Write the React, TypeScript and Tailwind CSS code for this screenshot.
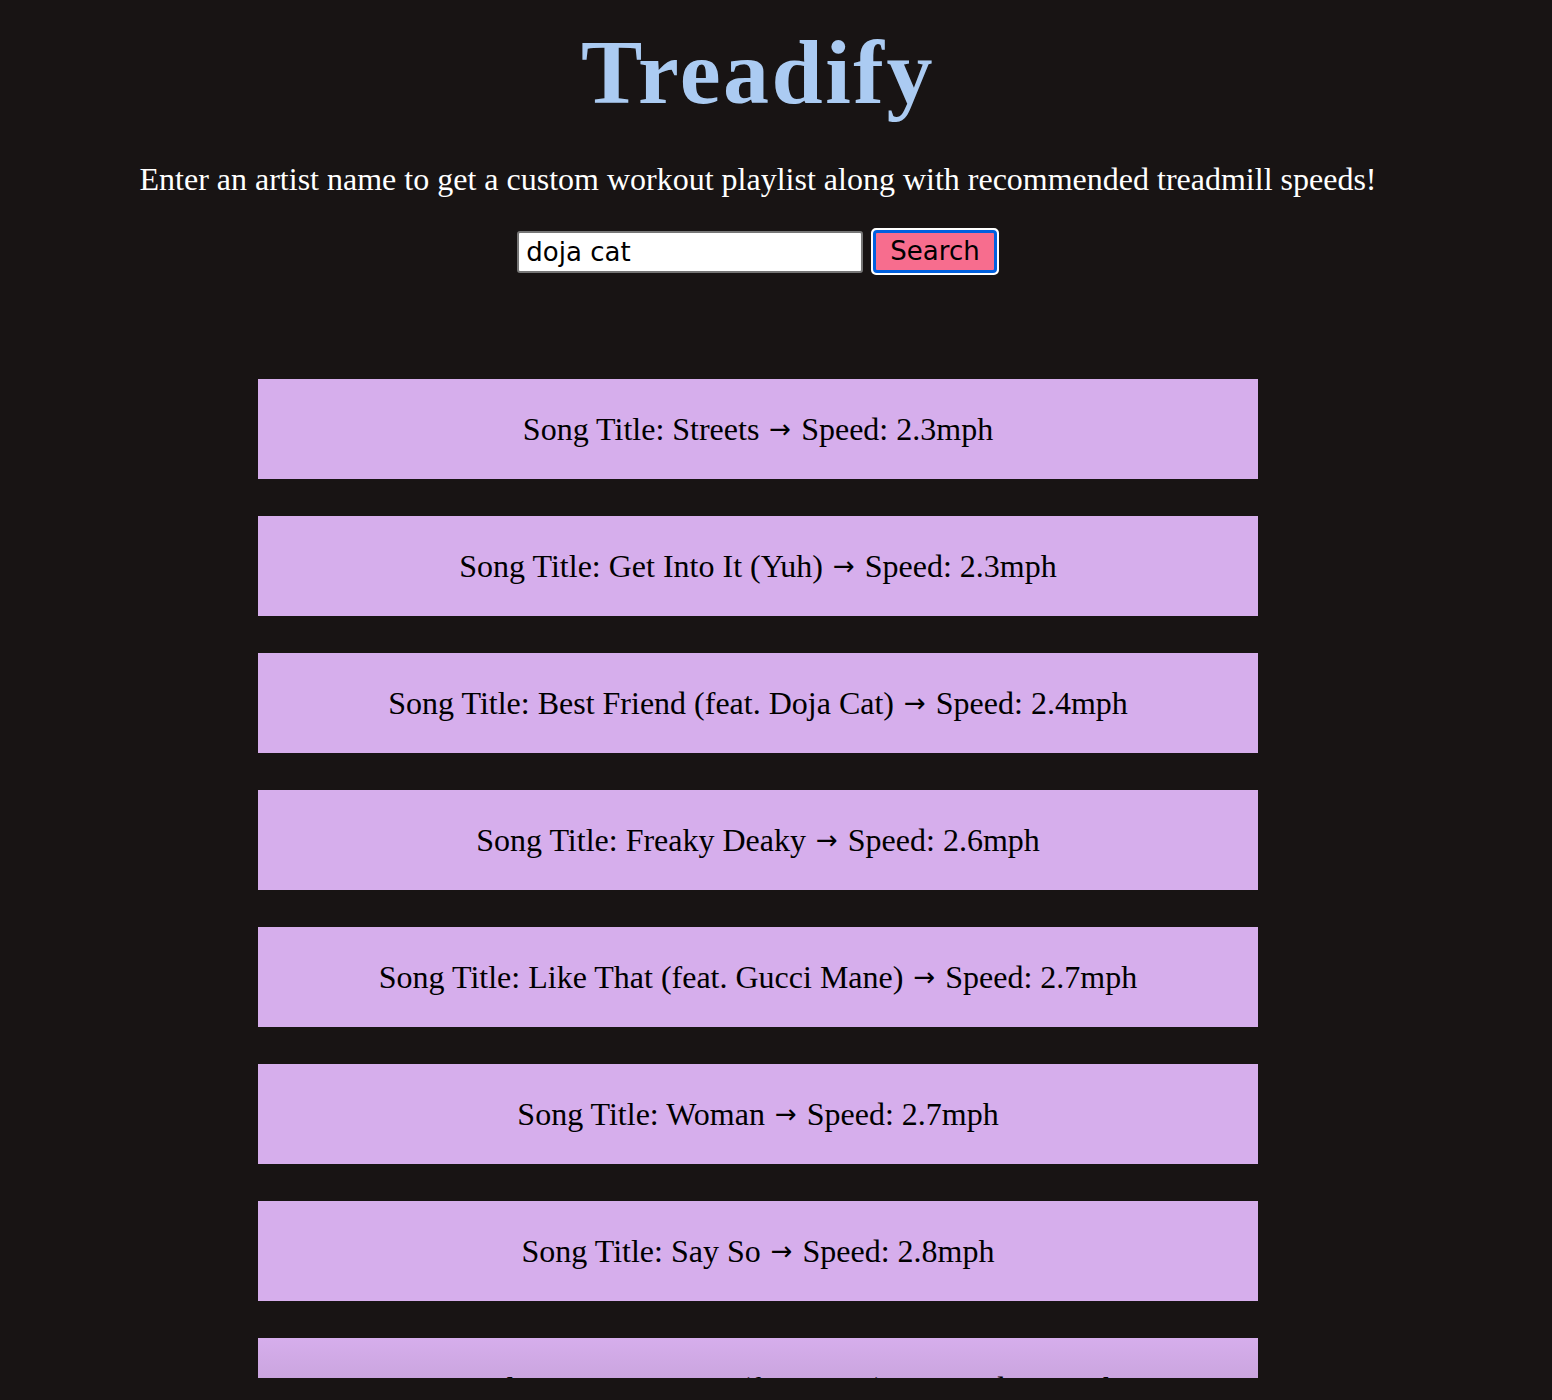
import React from "react";

const songs = [
  { title: "Streets", speed: "2.3" },
  { title: "Get Into It (Yuh)", speed: "2.3" },
  { title: "Best Friend (feat. Doja Cat)", speed: "2.4" },
  { title: "Freaky Deaky", speed: "2.6" },
  { title: "Like That (feat. Gucci Mane)", speed: "2.7" },
  { title: "Woman", speed: "2.7" },
  { title: "Say So", speed: "2.8" },
  { title: "Kiss Me More (feat. SZA)", speed: "2.8" },
];

export default function App() {
  return (
    <div className="h-[1400px] w-full overflow-hidden bg-[#181414] font-['Liberation_Serif',serif]">
      <div className="w-[1516px] flex flex-col items-center">
        {/* header */}
        <h1 className="mt-[26px] text-[92px] leading-none font-bold text-[#abcbf2] font-['Liberation_Serif',serif] tracking-[2.5px]">
          Treadify
        </h1>
        <p className="mt-[45px] text-[32px] leading-none text-white">
          Enter an artist name to get a custom workout playlist along with recommended treadmill speeds!
        </p>

        {/* search */}
        <div className="mt-[33px] flex items-center gap-[8px]">
          <input
            defaultValue="doja cat"
            className="w-[346px] h-[42px] bg-white border-2 border-[#767676] rounded-[3px] px-[7px] text-[26px] text-black font-['DejaVu_Sans',sans-serif] outline-none"
          />
          <button className="h-[47px] px-[4px] rounded-[5px] border-2 border-white bg-white">
            <span className="flex h-full items-center rounded-[4px] border-[3px] border-[#0060df] bg-[#f76d8e] px-[14px] text-[26px] text-black font-['DejaVu_Sans',sans-serif] -mx-[4px]">
              Search
            </span>
          </button>
        </div>

        {/* playlist */}
        <div className="relative mt-[104px] h-[999px] w-[1000px] overflow-hidden flex flex-col gap-[37px]">
          {songs.map((s, i) => (
            <div
              key={i}
              className="shrink-0 h-[100px] w-full bg-[#d6aeec] flex items-center justify-center text-[32px] text-black"
            >
              Song Title: {s.title} <span className="mx-[10px] font-['DejaVu_Sans',sans-serif] text-[26px]">→</span> Speed: {s.speed}mph
            </div>
          ))}
          <div className="absolute bottom-0 left-0 h-[40px] w-full bg-gradient-to-b from-transparent to-[#181414]/[0.06]" />
        </div>
      </div>
    </div>
  );
}
